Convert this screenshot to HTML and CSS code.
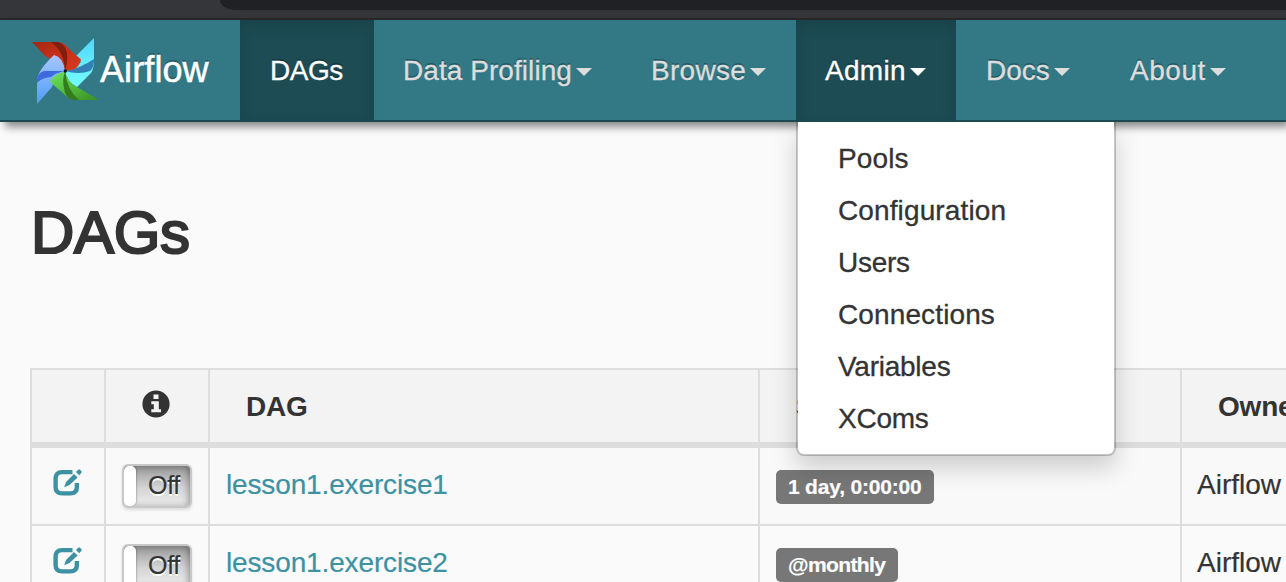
FILE: index.html
```html
<!DOCTYPE html>
<html lang="en">
<head>
<meta charset="utf-8">
<title>Airflow - DAGs</title>
<link rel="stylesheet" href="styles.css">
</head>
<body>
<svg class="defs" width="0" height="0" aria-hidden="true">
  <symbol id="edit" viewBox="0 0 30 28">
    <path d="M19.500 3.100H9Q2.600 3.100 2.600 9.500V18Q2.600 24.400 9 24.400H17.500Q23.900 24.400 23.900 18V14" fill="none" stroke="currentColor" stroke-width="4.400"/>
    <path d="M11.200 18.200L13 13L21 5L24.600 8.400L16.500 16Z" fill="currentColor"/>
    <path d="M22.900 3.100L25.300 .700Q26.200 0 27 .800L28.500 2.200Q29.200 3 28.400 3.800L26.300 6.300Z" fill="currentColor"/>
  </symbol>
</svg>
<div class="chrome"><div class="address"></div></div>
<nav class="navbar">
  <a class="brand">
    <svg class="logo" viewBox="0 0 68 68">
      <defs>
        <linearGradient id="red" x1="0" y1="0" x2="1" y2="1"><stop offset="0" stop-color="#a02812"/><stop offset=".5" stop-color="#c93019"/><stop offset="1" stop-color="#d8391f"/></linearGradient>
        <linearGradient id="green" x1="0" y1="0" x2="1" y2="1"><stop offset="0" stop-color="#6ee364"/><stop offset=".5" stop-color="#53bd3c"/><stop offset="1" stop-color="#398d20"/></linearGradient>
        <linearGradient id="cyan" x1="0" y1="1" x2="0" y2="0"><stop offset="0" stop-color="#75ffff"/><stop offset="1" stop-color="#54d4fb"/></linearGradient>
        <linearGradient id="blue" x1="0" y1="0" x2="0" y2="1"><stop offset="0" stop-color="#a9c6ff"/><stop offset="1" stop-color="#4d9dfa"/></linearGradient>
      </defs>
      <path d="M63 1L45 19L50 25L34 34Q36 45 46 50L60 36Q63 32 63 22Z" fill="url(#cyan)"/>
      <path d="M34 34Q50 31 63 22Q63 31 59 34Q48 38 34 34Z" fill="#3280b4"/>
      <path d="M1 5H27Q34 6 38 12L50 22.500Q49 28 44 32L34 34Q33 24 22 23L14 19Z" fill="url(#red)"/>
      <path d="M20 5H27Q34 7 36 16Q37 25 34 34Q33 14 20 5Z" fill="#811f0e"/>
      <path d="M6 67V43Q7 33 23 18Q32 20 34 34L23 44L21 50Z" fill="url(#blue)"/>
      <path d="M6 46V42Q7 36 13 34Q24 34 34 34Q24 36 20 40Q10 41 6 46Z" fill="#3e69df"/>
      <path d="M34 34Q37 46 46 50L68 63H42Q35 60 32 56L19 45Q20 39 34 34Z" fill="url(#green)"/>
      <path d="M34 34Q36 53 48 63H42Q34 61 33 51Q31 43 34 34Z" fill="#347c20"/>
      <circle cx="34.300" cy="34" r="1.700" fill="#08171b"/>
    </svg>
    <span class="brand-name">Airflow</span>
  </a>
  <ul class="nav">
    <li class="item dags active">DAGs</li>
    <li class="item profiling">Data Profiling<i class="caret"></i></li>
    <li class="item browse">Browse<i class="caret"></i></li>
    <li class="item admin active">Admin<i class="caret"></i>
      <ul class="menu">
        <li>Pools</li><li>Configuration</li><li class="tight">Users</li><li>Connections</li><li class="tight">Variables</li><li class="tight">XComs</li>
      </ul>
    </li>
    <li class="item docs">Docs<i class="caret"></i></li>
    <li class="item about">About<i class="caret"></i></li>
  </ul>
</nav>
<main class="content">
  <h2 class="title">DAGs</h2>
  <table class="dag-table">
    <colgroup><col class="c-edit"><col class="c-toggle"><col class="c-dag"><col class="c-schedule"><col class="c-owner"></colgroup>
    <thead>
      <tr>
        <th></th>
        <th class="info-cell"><svg class="info" viewBox="0 0 28 28"><circle cx="14" cy="14" r="13.600" fill="#333"/><path d="M11.500 4.500h5v4.500h-5zM9.300 11.200h7.500v8h2.200v3.100H9.300v-3.100h2.500v-4.900H9.300z" fill="#f3f3f3"/></svg></th>
        <th>DAG</th><th>Schedule</th><th>Owner</th>
      </tr>
    </thead>
    <tbody>
      <tr>
        <td class="edit-cell"><svg class="edit"><use href="#edit"/></svg></td>
        <td class="toggle-cell"><div class="toggle"><span class="handle"></span><span class="off">Off</span></div></td>
        <td><a class="dag-link">lesson1.exercise1</a></td>
        <td><span class="label">1 day, 0:00:00</span></td>
        <td>Airflow</td>
      </tr>
      <tr>
        <td class="edit-cell"><svg class="edit"><use href="#edit"/></svg></td>
        <td class="toggle-cell lower"><div class="toggle"><span class="handle"></span><span class="off">Off</span></div></td>
        <td><a class="dag-link">lesson1.exercise2</a></td>
        <td><span class="label monthly">@monthly</span></td>
        <td>Airflow</td>
      </tr>
    </tbody>
  </table>
</main>
</body>
</html>
```
FILE: styles.css
```css
* { box-sizing: border-box; }
html { overflow: hidden; }
body {
  margin: 0;
  height: 582px;
  overflow: hidden;
  background: #fafafa;
  color: #333;
  font: 28px/40px "Liberation Sans", Arial, sans-serif;
}
ul { margin: 0; padding: 0; list-style: none; }
.defs { display: block; }
.chrome {
  height: 20px;
  padding-left: 220px;
  background: #35363a;
  border-bottom: 2px solid #282828;
}
.address { height: 10px; background: #202124; border-bottom-left-radius: 22px 14px; }

.navbar {
  display: flex;
  position: relative;
  height: 102px;
  background: #337985;
  border-bottom: 2px solid #1c4a52;
  box-shadow: 4px 6px 8px -1px rgba(0, 0, 0, .45);
}
.brand {
  display: flex;
  flex: none;
  width: 240px;
  padding: 17px 0 0 31px;
  color: #fff;
}
.logo { width: 68px; height: 68px; flex: none; }
.brand-name { padding: 13px 0 0 1px; font-size: 36px; letter-spacing: .1px; font-variant-ligatures: none; text-shadow: 0 -2px 0 rgba(0, 0, 0, .25); -webkit-text-stroke: .5px; }
.nav { display: flex; }
.item {
  position: relative;
  display: flex;
  flex: none;
  height: 100px;
  padding: 31px 0 0 30px;
  color: #ddd;
  white-space: nowrap;
  text-shadow: 0 -2px 0 rgba(0, 0, 0, .25);
  -webkit-text-stroke: .3px;
}
.active { color: #fff; background: #1d4c54; box-shadow: inset 0 6px 16px rgba(0, 0, 0, .125); }
.admin.active { height: 102px; }
.dags { width: 134px; letter-spacing: -.5px; }
.profiling { width: 248px; padding-left: 29px; letter-spacing: .06px; }
.browse { width: 174px; padding-left: 29px; letter-spacing: .3px; }
.admin { width: 160px; padding-left: 29px; letter-spacing: .3px; }
.docs { width: 144px; }
.about { width: 156px; letter-spacing: .55px; }
.caret {
  width: 16px;
  height: 8px;
  margin: 17px 0 0 4px;
  border: 8px solid transparent;
  border-top-color: currentColor;
  border-bottom: 0;
}
.menu {
  position: absolute;
  z-index: 2;
  top: 102px;
  left: 0;
  width: 320px;
  height: 334px;
  padding: 11px 0 0 40px;
  color: #333;
  background: #fff;
  background-clip: padding-box;
  border: 2px solid rgba(0, 0, 0, .2);
  border-top: 0;
  border-radius: 0 0 8px 8px;
  box-shadow: 0 12px 24px rgba(0, 0, 0, .175);
  clip-path: inset(0 -40px -50px -40px);
  line-height: 52px;
  letter-spacing: .12px;
  text-shadow: none;
}
.tight { letter-spacing: -.25px; }

.content { padding: 78px 0 0 30px; }
.title {
  margin: 0 0 102px;
  padding-left: 1px;
  font-size: 60px;
  line-height: 66px;
  font-weight: 400;
  letter-spacing: -.3px;
  -webkit-text-stroke: 2.2px #333;
}
.dag-table {
  width: 1470px;
  table-layout: fixed;
  border-collapse: separate;
  border-spacing: 0;
  border: solid #ddd;
  border-width: 2px 0 0 2px;
}
.c-edit { width: 74px; }
.c-toggle { width: 104px; }
.c-dag { width: 550px; }
.c-schedule { width: 422px; }
.c-owner { width: 318px; }
th, td {
  padding: 17px 0 0 16px;
  border: solid #ddd;
  border-width: 0 2px 2px 0;
  text-align: left;
  vertical-align: top;
  white-space: nowrap;
}
th { height: 78px; padding-left: 36px; background: #f3f3f3; border-bottom-width: 6px; letter-spacing: -.2px; }
td { height: 78px; background: #f9f9f9; -webkit-text-stroke: .2px; }
td:last-child { padding-left: 15px; }
tr:nth-child(2) td { background: #fafafa; }
.info-cell { padding: 20px 0 0 36px; }
.info { display: block; width: 28px; height: 28px; }
.edit-cell { padding: 21px 0 0 21px; }
.edit { display: block; width: 30px; height: 28px; color: #3c92a3; }
.toggle-cell { padding-top: 16px; }
.toggle-cell.lower { padding-top: 18px; }
.toggle {
  display: flex;
  width: 70px;
  height: 44px;
  border: 2px solid #c8c8c8;
  border-radius: 6px;
  overflow: hidden;
  background: #e4e4e4;
  box-shadow: 0 2px 3px rgba(0, 0, 0, .12);
}
.handle { flex: none; width: 12px; background: #fff; border-radius: 5px; box-shadow: 1px 0 2px rgba(0, 0, 0, .2); z-index: 1; }
.off {
  flex: none;
  width: 66px;
  margin-left: -12px;
  padding-left: 24px;
  font-size: 25px;
  line-height: 39px;
  letter-spacing: -.3px;
  text-shadow: 0 2px 0 #fff;
  background: linear-gradient(#8f8f8f, #b5b5b5 25%, #d5d5d5 55%, #e4e4e4 85%);
  box-shadow: inset -3px 0 6px -1px rgba(0, 0, 0, .3);
}
.dag-link { color: #3c92a3; letter-spacing: -.14px; }
.label {
  display: block;
  width: 158px;
  height: 34px;
  margin-top: 5px;
  padding-left: 12px;
  border-radius: 5px;
  background: #777;
  color: #fff;
  font-size: 21px;
  font-weight: 700;
  line-height: 34px;
  letter-spacing: -.2px;
}
.label.monthly { width: 122px; letter-spacing: -.6px; }
```
